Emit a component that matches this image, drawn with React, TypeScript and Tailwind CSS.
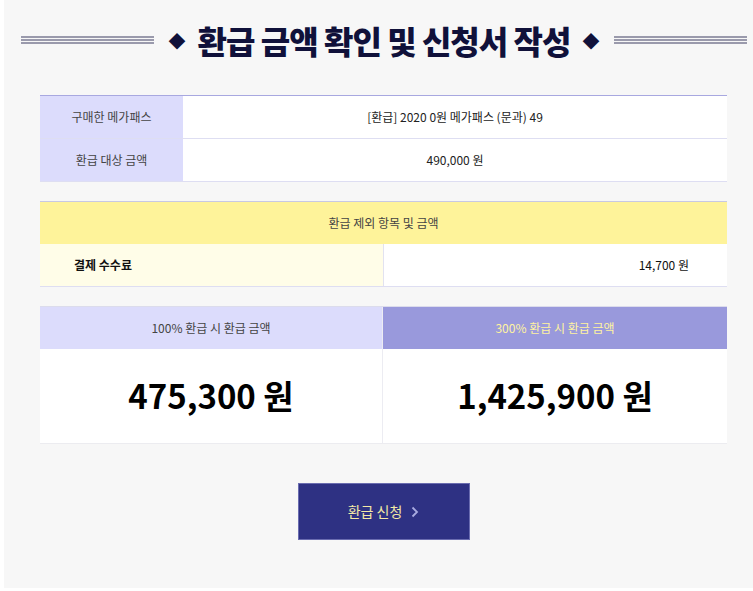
const font = { fontFamily: '"Noto Sans CJK KR", "Noto Sans", sans-serif' };

const Lines = () => (
  <div className="flex flex-col gap-[1px] w-[133px]">
    <div className="h-[2px] bg-[#9a9aac]" />
    <div className="h-[2px] bg-[#9a9aac]" />
    <div className="h-[2px] bg-[#9a9aac]" />
  </div>
);

export default function App() {
  return (
    <div className="bg-white w-[753px] h-[591px] overflow-hidden" style={font}>
      <div className="ml-[4px] h-[588px] bg-[#f7f7f7] pt-[20px] pl-[17px]">
        {/* title */}
        <div className="flex items-center h-[40px] w-[726px]">
          <Lines />
          <h1 className="flex-1 flex items-center justify-center gap-[12px] text-[#10113a] leading-none">
            <span className="text-[17px]">◆</span>
            <span className="text-[32px] font-black tracking-[-1px]">환급 금액 확인 및 신청서 작성</span>
            <span className="text-[17px]">◆</span>
          </h1>
          <Lines />
        </div>

        <div className="ml-[19px] w-[687px]">
          {/* purchase info */}
          <div className="mt-[35px] border-t border-[#a8a8e0] text-[12px] text-[#222]">
            <div className="flex h-[43px] border-b border-[#dedef2]">
              <div className="w-[143px] bg-[#dcdcfc] flex items-center justify-center text-[#444]">구매한 메가패스</div>
              <div className="flex-1 bg-white flex items-center justify-center">[환급] 2020 0원 메가패스 (문과) 49</div>
            </div>
            <div className="flex h-[43px] border-b border-[#dedef2]">
              <div className="w-[143px] bg-[#dcdcfc] flex items-center justify-center text-[#444]">환급 대상 금액</div>
              <div className="flex-1 bg-white flex items-center justify-center">490,000 원</div>
            </div>
          </div>

          {/* excluded items */}
          <div className="mt-[19px] border-t border-[#c8c8e4] text-[12px]">
            <div className="h-[42px] bg-[#fef39a] flex items-center justify-center text-[#444]">환급 제외 항목 및 금액</div>
            <div className="flex h-[43px] border-b border-[#dedef2]">
              <div className="w-[344px] bg-[#fffde8] border-r border-[#e2e2f0] flex items-center pl-[34px] font-bold text-[#111]">결제 수수료</div>
              <div className="flex-1 bg-white flex items-center justify-end pr-[38px] text-[#111]">14,700 원</div>
            </div>
          </div>

          {/* refund amounts */}
          <div className="mt-[19px] border-t border-[#dcdcec] flex border-b border-b-[#ececf0]">
            <div className="w-[343px] border-r border-[#ececf2]">
              <div className="h-[42px] bg-[#dcdcfc] flex items-center justify-center text-[12px] text-[#444]">100% 환급 시 환급 금액</div>
              <div className="h-[94px] bg-white flex items-center justify-center text-[33px] font-bold text-black">475,300 원</div>
            </div>
            <div className="flex-1">
              <div className="h-[42px] bg-[#9999dc] flex items-center justify-center text-[12px] text-[#fff3a0]">300% 환급 시 환급 금액</div>
              <div className="h-[94px] bg-white flex items-center justify-center text-[33px] font-bold text-black">1,425,900 원</div>
            </div>
          </div>

          {/* submit */}
          <div className="mt-[39px] flex justify-center">
            <button className="w-[172px] h-[57px] bg-[#2e3183] border border-[#6a6cb0] text-[#f3e9a6] text-[14px] flex items-center justify-center gap-[9px]">
              환급 신청
              <svg width="8" height="12" viewBox="0 0 8 12" fill="none">
                <path d="M1.5 1.5L6 6L1.5 10.5" stroke="#a9abe0" strokeWidth="1.8" />
              </svg>
            </button>
          </div>
        </div>
      </div>
    </div>
  );
}
